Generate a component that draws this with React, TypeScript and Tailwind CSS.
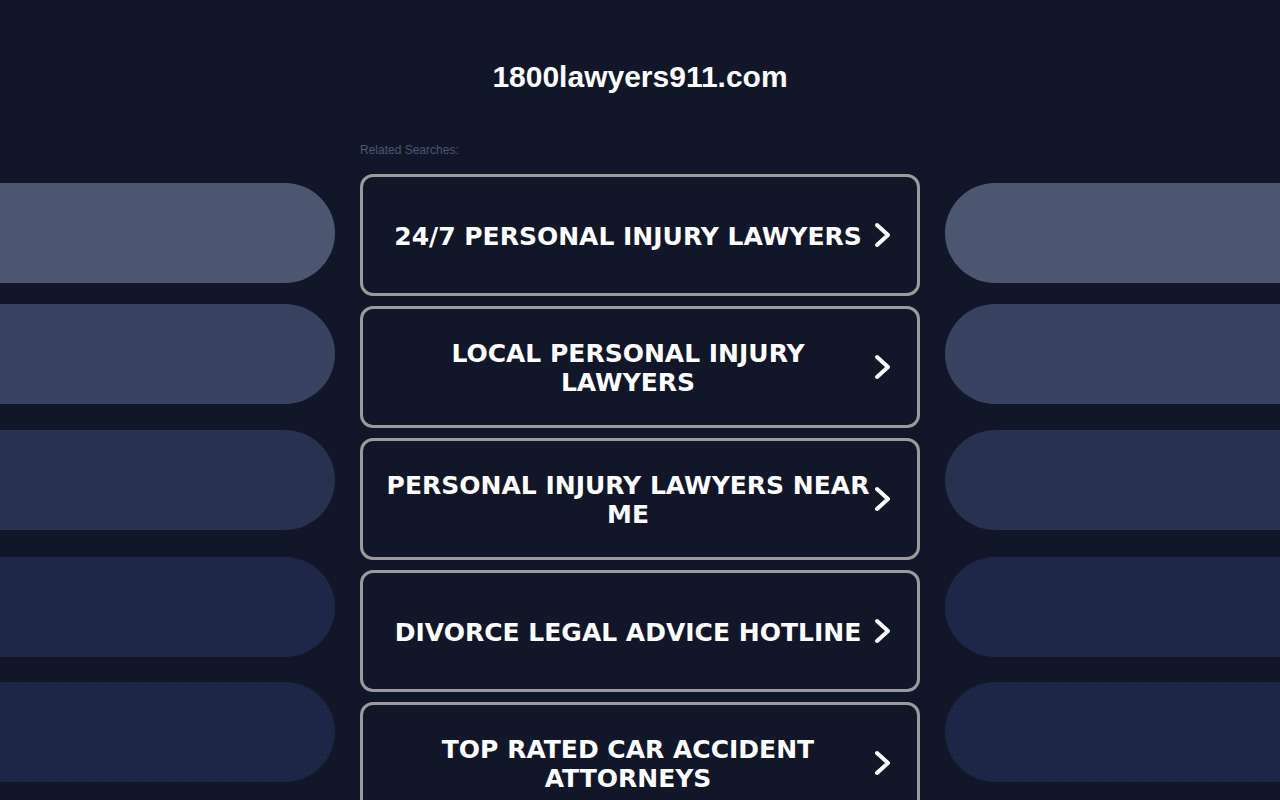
import React from "react"

const SEARCHES = [
  "24/7 PERSONAL INJURY LAWYERS",
  "LOCAL PERSONAL INJURY LAWYERS",
  "PERSONAL INJURY LAWYERS NEAR ME",
  "DIVORCE LEGAL ADVICE HOTLINE",
  "TOP RATED CAR ACCIDENT ATTORNEYS",
]

function Chevron() {
  return (
    <svg width="18" height="26" viewBox="0 0 18 26" fill="none" className="shrink-0">
      <polyline
        points="3,3 14,13 3,23"
        stroke="#ffffff"
        strokeWidth="4"
        strokeLinecap="round"
        strokeLinejoin="round"
      />
    </svg>
  )
}

// decorative side pills, left ones round on the right, right ones round on the left
function Pills({ side }: { side: "left" | "right" }) {
  const round = side === "left" ? "rounded-r-[50px]" : "rounded-l-[50px]"
  return (
    <div className="flex flex-col pt-[43px]">
      <div className={`h-[100px] bg-[#4d5671] ${round}`} />
      <div className={`mt-[21px] h-[100px] bg-[#3a4261] ${round}`} />
      <div className={`mt-[26px] h-[100px] bg-[#283150] ${round}`} />
      <div
        className={`mt-[27px] h-[100px] bg-[#1e2747] bg-[radial-gradient(#1b2343_0.8px,transparent_0.8px)] bg-[size:5px_5px] ${round}`}
      />
      <div
        className={`mt-[25px] h-[100px] bg-[#1d2646] bg-[radial-gradient(#172039_0.8px,transparent_0.8px)] bg-[size:5px_5px] ${round}`}
      />
    </div>
  )
}

export default function App() {
  return (
    <div className="min-h-screen w-full overflow-hidden bg-[#111729]">
      <div className="h-[140px] pt-[59px] text-center">
        <h1
          className="text-[30px] font-bold leading-[36px] text-white"
          style={{ fontFamily: '"Liberation Sans", Arial, sans-serif' }}
        >
          1800lawyers911.com
        </h1>
      </div>

      <div className="grid grid-cols-[335px_560px_335px] gap-x-[25px]">
        <Pills side="left" />

        <div>
          <p
            className="text-[12px] leading-[20px] text-[#4b5675]"
            style={{ fontFamily: '"Liberation Sans", Arial, sans-serif' }}
          >
            Related Searches:
          </p>
          <div className="mt-[14px] flex flex-col gap-[10px]">
            {SEARCHES.map((s) => (
              <a
                key={s}
                href="#"
                className="flex h-[122px] items-center rounded-[13px] border-[3px] border-[#9b9b9b] bg-[#111729] pl-[20px] pr-[24px]"
              >
                <span
                  className="flex-1 pt-[2px] text-center text-[25px] font-bold leading-[29px] text-white"
                  style={{ fontFamily: '"DejaVu Sans", Verdana, sans-serif' }}
                >
                  {s}
                </span>
                <span className="flex w-[20px] justify-center">
                  <Chevron />
                </span>
              </a>
            ))}
          </div>
        </div>

        <Pills side="right" />
      </div>
    </div>
  )
}
